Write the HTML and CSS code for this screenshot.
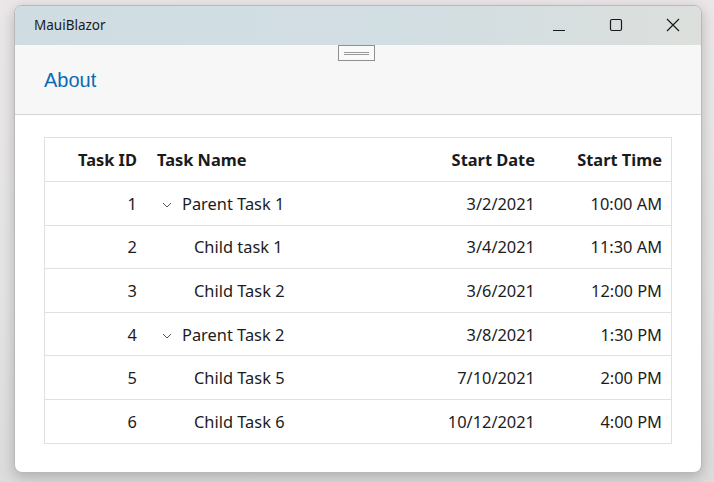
FILE: index.html
```html
<!DOCTYPE html>
<html>
<head>
<meta charset="utf-8">
<link rel="stylesheet" href="styles.css">
</head>
<body>
<div class="window">
  <div class="titlebar">
    <span class="title">MauiBlazor</span>
    <div class="controls">
      <svg class="ctl" width="46" height="40" viewBox="0 0 46 40"><line x1="17" y1="24.5" x2="29" y2="24.5" stroke="#1a1a1a" stroke-width="1.2"/></svg>
      <svg class="ctl" width="46" height="40" viewBox="0 0 46 40"><rect x="17.5" y="13.5" width="11" height="11" rx="1.5" fill="none" stroke="#1a1a1a" stroke-width="1.2"/></svg>
      <svg class="ctl" width="46" height="40" viewBox="0 0 46 40"><path d="M17 13 L29 25 M29 13 L17 25" stroke="#1a1a1a" stroke-width="1.2"/></svg>
    </div>
  </div>
  <div class="toprow">
    <div class="handle"><span></span></div>
    <a class="about" href="#">About</a>
  </div>
  <div class="content">
    <table class="grid">
      <thead>
        <tr><th class="r c-id">Task ID</th><th class="l c-name">Task Name</th><th class="r c-date">Start Date</th><th class="r c-time">Start Time</th></tr>
      </thead>
      <tbody>
        <tr><td class="r">1</td><td class="l"><span class="chev"><svg width="10" height="6" viewBox="0 0 10 6"><path d="M1 1 L5 5 L9 1" fill="none" stroke="#555" stroke-width="1"/></svg></span>Parent Task 1</td><td class="r">3/2/2021</td><td class="r">10:00 AM</td></tr>
        <tr><td class="r">2</td><td class="l child">Child task 1</td><td class="r">3/4/2021</td><td class="r">11:30 AM</td></tr>
        <tr><td class="r">3</td><td class="l child">Child Task 2</td><td class="r">3/6/2021</td><td class="r">12:00 PM</td></tr>
        <tr><td class="r">4</td><td class="l"><span class="chev"><svg width="10" height="6" viewBox="0 0 10 6"><path d="M1 1 L5 5 L9 1" fill="none" stroke="#555" stroke-width="1"/></svg></span>Parent Task 2</td><td class="r">3/8/2021</td><td class="r">1:30 PM</td></tr>
        <tr><td class="r">5</td><td class="l child">Child Task 5</td><td class="r">7/10/2021</td><td class="r">2:00 PM</td></tr>
        <tr><td class="r">6</td><td class="l child">Child Task 6</td><td class="r">10/12/2021</td><td class="r">4:00 PM</td></tr>
      </tbody>
    </table>
  </div>
</div>
</body>
</html>
```
FILE: styles.css
```css
html, body { margin: 0; }
body {
  width: 714px;
  height: 482px;
  background: linear-gradient(#ebe7e9, #e4e4e4 60%, #dcdcdc);
  padding: 5px 13px 0 14px;
  box-sizing: border-box;
  font-family: "Noto Sans", "Open Sans", sans-serif;
  overflow: hidden;
}
.window {
  width: 688px;
  height: 468px;
  border-radius: 8px;
  border: 1px solid #b9b9b9;
  box-sizing: border-box;
  background: #fff;
  overflow: hidden;
  box-shadow: 0 4px 14px rgba(0,0,0,0.22);
  display: flex;
  flex-direction: column;
}
.titlebar {
  height: 39px;
  flex: none;
  background: linear-gradient(90deg, #cfdde2 0%, #d2dee2 60%, #dcdfdc 100%);
  display: flex;
  align-items: center;
  justify-content: space-between;
}
.title {
  font-family: "Noto Sans", sans-serif;
  font-size: 13.5px;
  color: #1a1a1a;
  padding-left: 19px;
  padding-bottom: 1px;
}
.controls { display: flex; align-self: flex-start; padding-right: 5px; }
.ctl { display: block; margin-left: 11px; }
.controls .ctl:first-child { margin-left: 0; }
.toprow {
  height: 69px;
  flex: none;
  background: #f7f7f7;
  border-bottom: 1px solid #d6d5d5;
  display: flex;
  align-items: center;
  padding-left: 29px;
  position: relative;
}
.handle {
  position: absolute;
  left: 323px;
  top: 0;
  width: 37px;
  height: 16px;
  border: 1px solid #8f8f8f;
  box-sizing: border-box;
  background: #fafafa;
  display: flex;
  align-items: center;
  justify-content: center;
}
.handle span {
  width: 25px;
  height: 1px;
  border-top: 1px solid #999;
  border-bottom: 1px solid #999;
}
.about {
  font-family: "Liberation Sans", Arial, sans-serif;
  font-size: 20px;
  color: #0b6bb3;
  text-decoration: none;
  margin-top: 2px;
}
.content {
  padding: 22px 29px 0 29px;
}
.grid {
  width: 628px;
  border-collapse: collapse;
  border: 1px solid #e0e0e0;
  font-size: 16.4px;
  color: #1c1c1c;
}
.grid th {
  font-weight: 700;
  height: 43px;
  padding: 0;
  color: #1a1a1a;
}
.grid td {
  height: 42.6px;
  padding: 0;
  border-top: 1px solid #e0e0e0;
}
.grid tr:last-child td { border-bottom: 1px solid #e0e0e0; }
.r { text-align: right; }
.l { text-align: left; }
.c-id { width: 92px; }
.grid th:nth-child(2), .grid td:nth-child(2) { padding-left: 20px; }
.c-name { width: 230px; }
.c-date { width: 148px; }
.grid th:last-child, .grid td:last-child { padding-right: 9px; }
.chev { display: inline-block; width: 25px; padding-left: 5px; box-sizing: border-box; vertical-align: 2px; }
.chev svg { display: block; }
.grid td.child { padding-left: 57px; }
```
